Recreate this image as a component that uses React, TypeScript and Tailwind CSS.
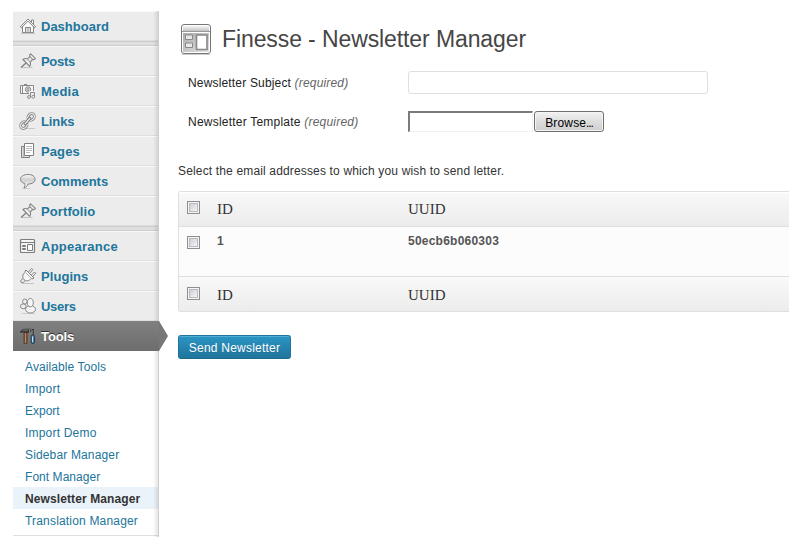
import type { ReactNode } from "react";

const iconBox = "block h-[18px] w-[18px] shrink-0";

function HomeIcon() {
  return (
    <svg viewBox="0 0 18 18" className={iconBox} fill="none" stroke="#888" strokeWidth="1">
      <path d="M2 16.5h14" stroke="#c4c4c4" />
      <path d="M12.500 5V3h2v4" fill="#fff" />
      <path d="M3.500 9v6.500h3v-5h5v5h3V9L9 3.600z" fill="#fafafa" />
      <path d="M1.300 9.800 9 2l7.700 7.800-1 1L9 4.200l-6.700 6.600z" fill="#f4f4f4" />
      <path d="M6.500 15.500v-5h5v5z" fill="#ddd" />
      <path d="M9 11v4.500" stroke="#aaa" />
    </svg>
  );
}

function PinIcon() {
  return (
    <svg viewBox="0 0 18 18" className={iconBox} fill="#efefef" stroke="#808080" strokeWidth="1.1" strokeLinejoin="round">
      <path d="M2.500 15.500h11" stroke="#c4c4c4" />
      <path d="m7 11-5 4.500" strokeWidth="1.400" />
      <path d="M4 7.500c1.500-1.200 3-1.200 4.300-.6L11 4.700c-.6-1.200-.4-2.200.6-2.900l4.800 4.500c-.6 1.200-1.700 1.600-2.900 1.100l-2.300 2.700c.8 1.500.6 2.800-.5 4.200z" />
      <path d="m11 4.700 2.500 2.700" stroke="#999" />
      <path d="m8.300 6.900 2.900 3.200" stroke="#aaa" />
    </svg>
  );
}

function MediaIcon() {
  return (
    <svg viewBox="0 0 18 18" className={iconBox} fill="#f8f8f8" stroke="#888" strokeWidth="1">
      <path d="M1.500 3.500h13v8h-13z" />
      <path d="M5 2.500h3M3.500 4v7" />
      <circle cx="9" cy="7.500" r="2.700" fill="#ddd" />
      <circle cx="9" cy="7.500" r="1" fill="#fff" />
      <path d="M11.500 14v-3.500h4V14" fill="none" stroke="#f0f0f0" strokeWidth="3" />
      <path d="M11.500 15v-4.500h4V15" fill="none" />
      <circle cx="10" cy="15" r="1.400" />
      <circle cx="14.200" cy="14.800" r="1.400" />
    </svg>
  );
}

function LinkIcon() {
  return (
    <svg viewBox="0 0 18 18" className={iconBox} fill="none">
      <path d="M3 16.500h13" stroke="#c8c8c8" />
      <g transform="rotate(-48 8.500 9)">
        <ellipse cx="3" cy="9" rx="3.500" ry="2.900" stroke="#7c7c7c" strokeWidth="2.800" />
        <ellipse cx="14" cy="9" rx="3.500" ry="2.900" stroke="#7c7c7c" strokeWidth="2.800" />
        <ellipse cx="3" cy="9" rx="3.500" ry="2.900" stroke="#eee" strokeWidth="1.200" />
        <ellipse cx="14" cy="9" rx="3.500" ry="2.900" stroke="#eee" strokeWidth="1.200" />
        <path d="M5 9h7" stroke="#7c7c7c" strokeWidth="3.200" strokeLinecap="round" />
        <path d="M5 9h7" stroke="#eee" strokeWidth="1.400" strokeLinecap="round" />
      </g>
    </svg>
  );
}

function PagesIcon() {
  return (
    <svg viewBox="0 0 18 18" className={iconBox} fill="#ddd" stroke="#808080">
      <path d="M2.500 4.500h8v11h-8z" />
      <path d="M4.500 5v10" stroke="#bbb" />
      <path d="M5.500 1.500h9v12h-9z" fill="#fff" />
      <path d="M7 4.500h6M7 6.500h6M7 8.500h6M7 10.500h4" stroke="#bbb" />
    </svg>
  );
}

function CommentIcon() {
  return (
    <svg viewBox="0 0 18 18" className={iconBox} stroke="#808080">
      <defs>
        <linearGradient id="bubble" x1="0" y1="0" x2="0" y2="1">
          <stop offset="0" stopColor="#fafafa" />
          <stop offset="0.400" stopColor="#cfcfcf" />
          <stop offset="1" stopColor="#fff" />
        </linearGradient>
      </defs>
      <path d="M3 16.500h8" stroke="#ccc" />
      <path
        d="M9 2.500c4.500 0 7 2 7 4.800s-2.500 4.700-7 4.700c-.6 2-1.800 3.300-4 4 .9-1.400 1.100-3 .7-4.500C3 10.900 1.500 9.300 1.500 7.300 1.500 4.500 4.500 2.500 9 2.500z"
        fill="url(#bubble)"
      />
    </svg>
  );
}

function LayoutIcon() {
  return (
    <svg viewBox="0 0 18 18" className={iconBox} fill="#fff" stroke="#7c7c7c">
      <rect x="1.500" y="2.500" width="14" height="13" rx="1" fill="#f5f5f5" strokeWidth="1.200" />
      <path d="M2 5.500h13" />
      <path d="M3.500 8.500h3v1h-3zM3.500 11.500h3v1h-3zM8.500 7.500h5v6h-5z" />
    </svg>
  );
}

function PlugIcon() {
  return (
    <svg viewBox="0 0 18 18" className={iconBox} fill="none" stroke="#808080" strokeLinejoin="round">
      <path d="M3 16.500h12" stroke="#c4c4c4" />
      <path d="M5 11.500c-2.500.5-4 2-3 3.800 1.500.8 3.500-.3 4.500-2" />
      <path d="m9.500 5 3-3.500 1.300 1L11 6M12.500 8l3-3 1.200 1.200L13.800 9.500" fill="#fff" />
      <path d="M7 3 15 11l-1.300.8-1.200-.5c-2.500 3-5.500 3.200-7.500 1.200s-1.700-5 1.300-7.500L6 4z" fill="#f6f6f6" />
      <path d="m6.500 5.500 5.700 5.700" stroke="#aaa" />
    </svg>
  );
}

function UsersIcon() {
  return (
    <svg viewBox="0 0 18 18" className={iconBox} fill="#eee" stroke="#888">
      <path d="M3 16.500h13" stroke="#ccc" />
      <ellipse cx="4.300" cy="9.300" rx="2.900" ry="2.400" />
      <ellipse cx="5.800" cy="4.500" rx="2.200" ry="2.500" />
      <ellipse cx="11.500" cy="12.300" rx="5" ry="3.700" fill="#f4f4f4" />
      <path d="M8.300 5.500c0-2.500 1.300-4 3-4s3 1.500 3 4-1 4.300-3 4.300-3-1.800-3-4.300z" fill="#f7f7f7" />
    </svg>
  );
}

function ToolsIcon() {
  return (
    <svg viewBox="0 0 18 18" className={iconBox} fill="none">
      <path d="M6.500 4v12.500" stroke="#3b1d10" strokeWidth="3.600" />
      <path d="M6.500 5v11" stroke="#c08a63" strokeWidth="1.800" />
      <path d="M1.500 5.500C2.200 2.800 4 2 8 2.200h1.500v3.300H5C3.500 4.500 2.500 5 1.500 5.500z" fill="#444" stroke="#292929" strokeWidth=".8" />
      <path d="M3.500 3.500c1.500-.7 3-.6 5.500-.5" stroke="#888" strokeWidth=".8" />
      <path d="M11.200 1.500c1 1 1 2.500 0 3.500" stroke="#333" />
      <path d="M13.800 2v7" stroke="#262626" strokeWidth="1.600" />
      <path d="M13.500 3v5" stroke="#999" strokeWidth=".6" />
      <rect x="12.200" y="8" width="3.200" height="8.500" rx="1.500" fill="#4e8cbb" stroke="#233745" />
      <path d="M13.500 9.500v5.500" stroke="#c2e1f4" />
    </svg>
  );
}

function MenuItem({ icon, label, tracking }: { icon: ReactNode; label: string; tracking: string }) {
  return (
    <li className="flex h-[30px] items-center border-t border-b border-t-[#f9f9f9] border-b-[#dfdfdf] bg-[#ececec] pl-1.5 text-[13px] font-bold text-[#21759b]">
      {icon}
      <span className={`ml-1 pt-0.5 ${tracking}`}>{label}</span>
    </li>
  );
}

function Separator() {
  return <li className="h-[5px] border-y border-[#cdcdcd] bg-[#dfdfdf]" />;
}

const submenu: [string, string][] = [
  ["Available Tools", "tracking-[0.1px]"],
  ["Import", "tracking-[0.2px]"],
  ["Export", "tracking-[0px]"],
  ["Import Demo", "tracking-[0.2px]"],
  ["Sidebar Manager", "tracking-[0.15px]"],
  ["Font Manager", "tracking-[0.05px]"],
  ["Newsletter Manager", "tracking-[0.1px]"],
  ["Translation Manager", "tracking-[0.18px]"],
];

function Sidebar() {
  return (
    <nav className="relative w-[146px] shrink-0 self-start">
      <ul>
        <MenuItem icon={<HomeIcon />} label="Dashboard" tracking="tracking-[0px]" />
        <Separator />
        <MenuItem icon={<PinIcon />} label="Posts" tracking="tracking-[-0.3px]" />
        <MenuItem icon={<MediaIcon />} label="Media" tracking="tracking-[0.2px]" />
        <MenuItem icon={<LinkIcon />} label="Links" tracking="tracking-[-0.1px]" />
        <MenuItem icon={<PagesIcon />} label="Pages" tracking="tracking-[0.1px]" />
        <MenuItem icon={<CommentIcon />} label="Comments" tracking="tracking-[0px]" />
        <MenuItem icon={<PinIcon />} label="Portfolio" tracking="tracking-[0.1px]" />
        <Separator />
        <MenuItem icon={<LayoutIcon />} label="Appearance" tracking="tracking-[0.25px]" />
        <MenuItem icon={<PlugIcon />} label="Plugins" tracking="tracking-[0.06px]" />
        <MenuItem icon={<UsersIcon />} label="Users" tracking="tracking-[-0.3px]" />
        <li className="relative z-10 flex h-[30px] items-center bg-linear-to-b from-[#808080] to-[#6d6d6d] pl-1.5 text-[13px] font-bold text-white">
          <ToolsIcon />
          <span className="ml-1 pt-0.5 tracking-[-0.1px] [text-shadow:0_-1px_0_#333]">Tools</span>
          <svg viewBox="0 0 9 30" className="absolute top-0 left-full h-[30px] w-[9px]">
            <path d="M0 0 9 15 0 30z" fill="#777" />
          </svg>
        </li>
      </ul>
      <ul className="border-b border-[#dfdfdf] bg-white py-1 text-[12px] leading-[22px] text-[#21759b]">
        {submenu.map(([label, tracking]) => (
          <li
            key={label}
            className={
              label === "Newsletter Manager"
                ? "h-[22px] bg-[#eaf2fa] pt-px pl-3 font-bold text-[#333]"
                : "h-[22px] pt-px pl-3"
            }
          >
            <span className={tracking}>{label}</span>
          </li>
        ))}
      </ul>
      <div className="absolute top-0 right-0 -bottom-px w-[6px] border-r border-[#cfcfcf] bg-linear-to-r from-transparent to-black/10" />
    </nav>
  );
}

function Checkbox() {
  return (
    <span className="block h-[13px] w-[13px] border border-[#8e8f8f] bg-[#f4f4f4] p-px">
      <span className="block h-[9px] w-[9px] border border-[#b8bcc2] bg-linear-to-br from-[#cbcfd5] to-[#f6f6f6]" />
    </span>
  );
}

function HeadRow({ className }: { className: string }) {
  return (
    <div
      className={`flex items-center bg-linear-to-b from-[#f9f9f9] to-[#ececec] font-['Liberation_Serif',serif] text-[15px] text-[#333] ${className}`}
    >
      <div className="w-[30px] pb-[3px] pl-2">
        <Checkbox />
      </div>
      <div className="w-[191px] pl-2">ID</div>
      <div className="pl-2">UUID</div>
    </div>
  );
}

export default function App() {
  return (
    <div className="flex h-[551px] w-[803px] overflow-hidden bg-white pt-[11px] pl-[13px] font-['Liberation_Sans',Arial,sans-serif] text-[12px] text-[#333]">
      <Sidebar />
      <main className="w-[630px] pl-[19px]">
        <header className="flex h-[60px] items-start pt-3">
          <svg viewBox="0 0 32 32" className="ml-[2px] h-8 w-8 shrink-0">
            <defs>
              <linearGradient id="bar" x1="0" y1="0" x2="0" y2="1">
                <stop offset="0" stopColor="#f4f4f4" />
                <stop offset="1" stopColor="#c4c4c4" />
              </linearGradient>
              <linearGradient id="pane" x1="0" y1="0" x2="1" y2="1">
                <stop offset="0" stopColor="#aaa" />
                <stop offset="1" stopColor="#e4e4e4" />
              </linearGradient>
            </defs>
            <path d="M1.500 31.500h29" stroke="#ccc" />
            <rect x="1.500" y="1.500" width="29" height="29" rx="2.500" fill="#fff" stroke="#777" />
            <rect x="3" y="3" width="26" height="5" fill="url(#bar)" />
            <path d="M2 8.500h28" stroke="#999" />
            <rect x="3" y="10" width="26" height="19" fill="url(#pane)" />
            <path d="M5.500 12h7v4.500h-7zM5.500 20h7v4.500h-7z" fill="#e8e8e8" stroke="#888" />
            <path d="M16.500 12h10.500v14.500H16.500z" fill="#fff" stroke="#888" strokeWidth="1.600" />
          </svg>
          <h1 className="mt-px ml-2.5 text-[23px] leading-[30px] tracking-[-0.1px] text-[#464646]">
            Finesse - Newsletter Manager
          </h1>
        </header>
        <div className="flex h-[23px] items-center pl-2.5">
          <label className="w-[220px] tracking-[0.17px] text-[#222]">
            Newsletter Subject <em className="text-[#666]">(required)</em>
          </label>
          <div className="h-[23px] w-[300px] rounded-[3px] border border-[#dfdfdf] bg-white" />
        </div>
        <div className="mt-4 flex h-[23px] items-center pl-2.5">
          <label className="w-[220px] tracking-[0.22px] text-[#222]">
            Newsletter Template <em className="text-[#666]">(required)</em>
          </label>
          <div className="h-[21px] w-[125px] border-t-2 border-r border-b border-l-2 border-t-[#7b7b7b] border-r-[#f0f0f0] border-b-[#f0f0f0] border-l-[#7b7b7b]" />
          <button className="ml-px h-[21px] w-[70px] rounded-[3px] border border-[#707070] bg-linear-to-b from-[#f2f2f2] via-[#dddddd] to-[#cfcfcf] pt-[3px] text-[12px] leading-[16px] tracking-[0.15px] text-black shadow-[inset_0_0_0_1px_#f4f4f4]">
            Browse<span className="tracking-[-1.1px]">...</span>
          </button>
        </div>
        <p className="mt-[29px] h-[18px] leading-[18px] tracking-[0.155px]">
          Select the email addresses to which you wish to send letter.
        </p>
        <div className="mt-[11px] w-[611px] rounded-l-[3px] border-y border-l border-[#dfdfdf] bg-[#fcfcfc]">
          <HeadRow className="h-[35px] rounded-tl-[2px] border-b border-[#dfdfdf] shadow-[inset_0_1px_0_#fff]" />
          <div className="flex h-[49px] font-bold text-[#555]">
            <div className="w-[30px] pt-[9px] pl-2">
              <Checkbox />
            </div>
            <div className="w-[191px] pt-1.5 pl-2 leading-[16px]">1</div>
            <div className="pt-1.5 pl-2 leading-[16px] tracking-[0.23px]">50ecb6b060303</div>
          </div>
          <HeadRow className="h-[35px] rounded-bl-[2px] border-t border-[#dfdfdf] pt-0.5" />
        </div>
        <button className="mt-[23px] block h-6 w-[113px] rounded-[3px] border border-[#21759b] border-b-[#1e6a8d] bg-linear-to-b from-[#2a95c5] to-[#21759b] pt-[2px] text-[12px] leading-[20px] tracking-[0.22px] text-white shadow-[inset_0_1px_0_rgba(120,200,230,0.5)] [text-shadow:0_1px_0_rgba(0,0,0,0.1)]">
          Send Newsletter
        </button>
      </main>
    </div>
  );
}
